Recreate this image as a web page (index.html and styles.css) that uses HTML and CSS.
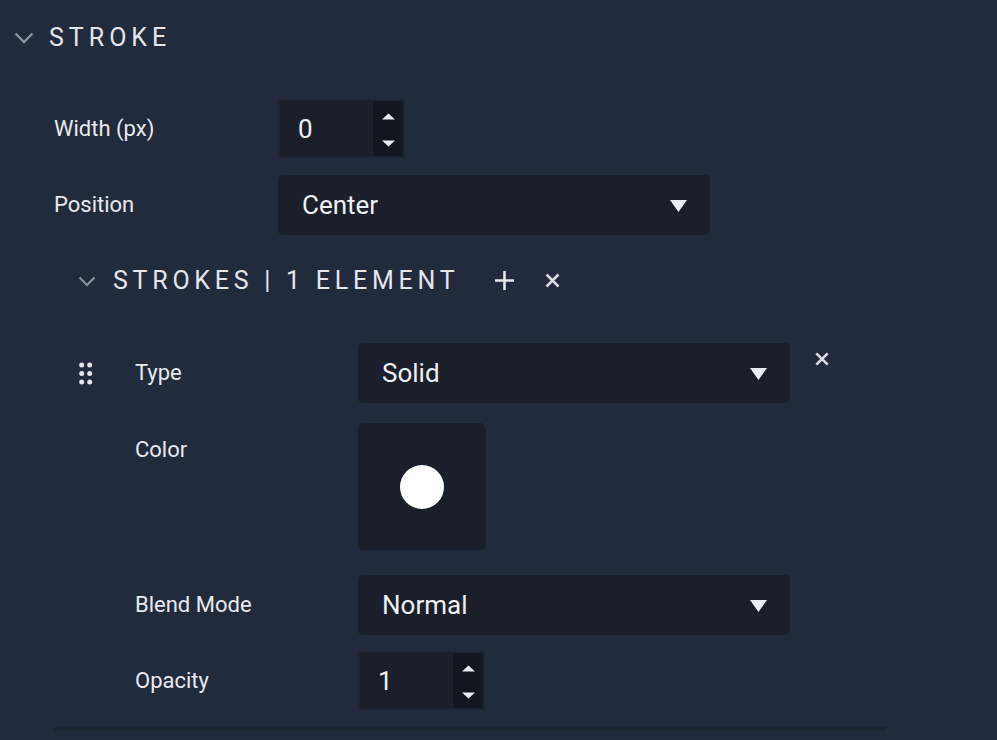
FILE: index.html
```html
<!DOCTYPE html>
<html lang="en">
<head>
<meta charset="utf-8">
<title>Stroke</title>
<link rel="stylesheet" href="styles.css">
</head>
<body>
<div class="panel">
  <div class="sec-head">
    <svg class="chev" width="20" height="12" viewBox="0 0 20 12"><polyline points="1.5,1.5 10,10 18.5,1.5" fill="none" stroke="#8b919c" stroke-width="2.4"/></svg>
    <span class="sec-title">STROKE</span>
  </div>

  <div class="sec-body">
    <div class="row">
      <div class="lbl lbl-59">Width (px)</div>
      <div class="num">
        <div class="num-val">0</div>
        <div class="num-step">
          <svg width="30" height="55" viewBox="0 0 30 55"><polygon points="9,18.5 22,18.5 15.5,12.5" fill="#ecebf0"/><polygon points="9,39.5 22,39.5 15.5,45.5" fill="#ecebf0"/></svg>
        </div>
      </div>
    </div>
    <div class="row">
      <div class="lbl">Position</div>
      <div class="select"><span>Center</span><svg width="17" height="12" viewBox="0 0 17 12"><polygon points="0,0 17,0 8.5,12" fill="#ecebf2"/></svg></div>
    </div>

    <div class="sub-head">
      <svg class="sub-chev" width="18" height="11" viewBox="0 0 18 11"><polyline points="1.5,1.5 9,9 16.5,1.5" fill="none" stroke="#8b919c" stroke-width="2.2"/></svg>
      <span class="sub-title">STROKES | 1 ELEMENT</span>
      <svg class="plus" width="19" height="19" viewBox="0 0 19 19"><path d="M9.5 0V19M0 9.5H19" stroke="#e6e7ec" stroke-width="2.6"/></svg>
      <svg class="xbtn" width="15" height="15" viewBox="0 0 15 15"><path d="M1.5 1.5L13.5 13.5M13.5 1.5L1.5 13.5" stroke="#d8d9df" stroke-width="2.6"/></svg>
    </div>

    <div class="item">
      <div class="drag">
        <svg width="14" height="23" viewBox="0 0 14 23"><g fill="#e4e5ea"><circle cx="2.7" cy="3" r="2.5"/><circle cx="10.7" cy="3" r="2.5"/><circle cx="2.7" cy="11.5" r="2.5"/><circle cx="10.7" cy="11.5" r="2.5"/><circle cx="2.7" cy="20" r="2.5"/><circle cx="10.7" cy="20" r="2.5"/></g></svg>
      </div>
      <div class="fields">
        <div class="row">
          <div class="lbl">Type</div>
          <div class="select"><span>Solid</span><svg width="17" height="12" viewBox="0 0 17 12"><polygon points="0,0 17,0 8.5,12" fill="#ecebf2"/></svg></div>
        </div>
        <div class="row">
          <div class="lbl">Color</div>
          <div class="swatch"><div class="dot"></div></div>
        </div>
        <div class="row row-blend">
          <div class="lbl">Blend Mode</div>
          <div class="select"><span>Normal</span><svg width="17" height="12" viewBox="0 0 17 12"><polygon points="0,0 17,0 8.5,12" fill="#ecebf2"/></svg></div>
        </div>
        <div class="row">
          <div class="lbl lbl-59">Opacity</div>
          <div class="num">
            <div class="num-val">1</div>
            <div class="num-step">
              <svg width="30" height="55" viewBox="0 0 30 55"><polygon points="9,18.5 22,18.5 15.5,12.5" fill="#ecebf0"/><polygon points="9,39.5 22,39.5 15.5,45.5" fill="#ecebf0"/></svg>
            </div>
          </div>
        </div>
      </div>
      <svg class="item-close" width="14" height="14" viewBox="0 0 14 14"><path d="M1.3 1.3L12.7 12.7M12.7 1.3L1.3 12.7" stroke="#dcdde3" stroke-width="2.6"/></svg>
    </div>

    <div class="divider"></div>
  </div>
</div>
</body>
</html>
```

FILE: styles.css
```css
html, body {
  margin: 0;
  padding: 0;
  background: #222b3b;
}
body {
  font-family: Roboto, "Noto Sans", "Liberation Sans", sans-serif;
  color: #e8e9ee;
  width: 997px;
  height: 740px;
  overflow: hidden;
}
.panel {
  padding: 23px 0 0 14px;
}
.sec-head {
  display: flex;
  align-items: center;
  height: 30px;
}
.chev {
  display: block;
  margin-right: 15px;
}
.sec-title,
.sub-title {
  font-size: 25px;
  line-height: 30px;
  letter-spacing: 5px;
  color: #e4e6ec;
}
.sub-title {
  letter-spacing: 4.75px;
}
.sec-body {
  padding-left: 40px;
  margin-top: 46px;
}
.row {
  display: flex;
  align-items: flex-start;
  margin-bottom: 17px;
}
.row-blend {
  margin-bottom: 16px;
}
.lbl {
  width: 224px;
  flex: none;
  font-size: 22px;
  line-height: 60px;
  color: #e8e9ee;
}
.lbl-59 {
  line-height: 59px;
}
.num {
  display: flex;
  width: 123px;
  height: 55px;
  border: 2px solid #1d2533;
  background: #1a1f29;
}
.num-val {
  flex: 1;
  padding-left: 18px;
  font-size: 26px;
  line-height: 56px;
  color: #eef0f4;
}
.num-step {
  width: 30px;
  background: #12161f;
}
.num-step svg {
  display: block;
}
.select {
  box-sizing: border-box;
  width: 432px;
  height: 60px;
  display: flex;
  align-items: center;
  justify-content: space-between;
  padding: 0 23px 0 24px;
  background: #1a1f29;
  border-radius: 5px;
  font-size: 26px;
  color: #eef0f4;
}
.select svg {
  display: block;
  margin-top: 1px;
}
.sub-head {
  display: flex;
  align-items: center;
  height: 30px;
  margin-top: 31px;
  padding-left: 24px;
}
.sub-chev {
  display: block;
  margin-right: 17px;
}
.plus {
  display: block;
  margin-left: 36px;
  margin-top: -1px;
}
.xbtn {
  display: block;
  margin-left: 31px;
  margin-top: -1px;
}
.item {
  display: flex;
  align-items: flex-start;
  margin-top: 47px;
  padding-left: 25px;
}
.drag {
  width: 56px;
  flex: none;
  padding-top: 19px;
}
.drag svg {
  display: block;
}
.fields {
  display: flex;
  flex-direction: column;
}
.fields .lbl {
  width: 223px;
}
.swatch {
  width: 128px;
  height: 127px;
  margin: 3px 0 8px;
  background: #1a1f29;
  border-radius: 6px;
  display: flex;
  align-items: center;
  justify-content: center;
}
.dot {
  width: 44px;
  height: 44px;
  border-radius: 50%;
  background: #ffffff;
}
.item-close {
  display: block;
  margin-left: 25px;
  margin-top: 9px;
}
.divider {
  width: 832px;
  height: 4px;
  background: #1d2533;
}
```
